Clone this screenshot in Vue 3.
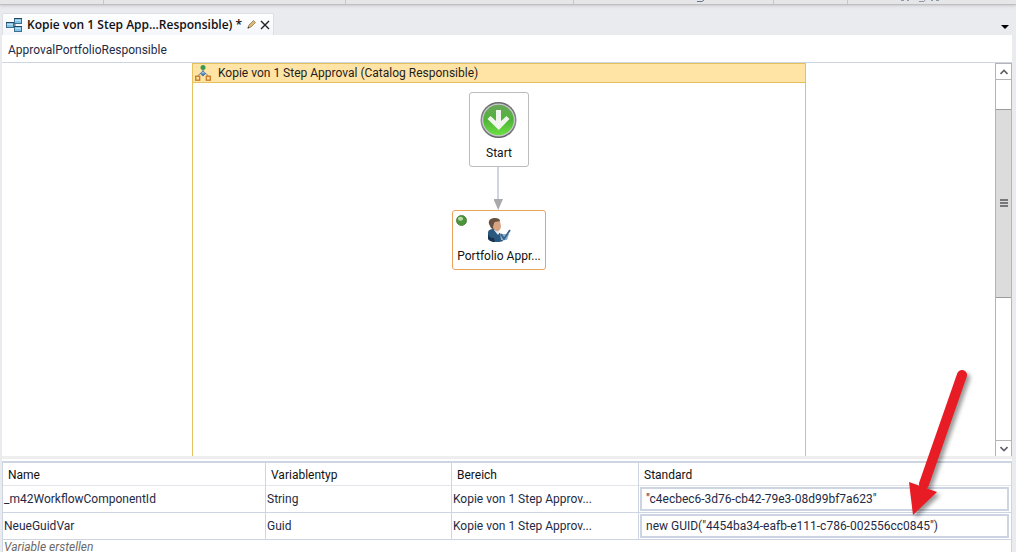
<script setup>
import { ref } from 'vue'

const rows = ref([
  { name: '_m42WorkflowComponentId', type: 'String', scope: 'Kopie von 1 Step Approv...', value: '"c4ecbec6-3d76-cb42-79e3-08d99bf7a623"' },
  { name: 'NeueGuidVar', type: 'Guid', scope: 'Kopie von 1 Step Approv...', value: 'new GUID("4454ba34-eafb-e111-c786-002556cc0845")' },
])
</script>

<template>
  <div class="app">
    <div class="ribbon">
      <i></i><i></i><i></i>
      <i><svg width="8" height="2" viewBox="0 0 8 2"><path d="M0 1.500h5l2-1.500" stroke="#66748c" fill="none" /></svg></i>
      <i></i>
      <i class="end"><svg width="38" height="2" viewBox="0 0 38 2"><path d="M0 .5h3M6 .5h2M18 1.500h5l1-1.500M30 .5h2M35 .5h3" stroke="#8f9aa8" fill="none" /></svg></i>
    </div>
    <header class="tabs">
      <div class="tab">
        <svg class="tab-icon" width="16" height="14" viewBox="0 0 16 14">
          <path d="M6 7h3M9 3v8" stroke="#48627a" fill="none" />
          <g stroke="#3f6f8f" fill="#83c5e8">
            <rect x="0.500" y="4.500" width="7" height="5" />
            <rect x="8.500" y="0.500" width="7" height="5" />
            <rect x="8.500" y="8.500" width="7" height="5" />
          </g>
          <path d="M0 4.500h8M8 .5h8M8 8.500h8" stroke="#27455c" />
          <path d="M1 6.500h6M9 2.500h6M9 10.500h6" stroke="#b5dff4" />
        </svg>
        <span class="tab-title">Kopie von 1 Step App...Responsible) *</span>
        <svg width="9" height="9" viewBox="0 0 9 9">
          <path d="M1 8l1-3 4.500-4.500 2 2L4 7z" fill="#dcb878" stroke="#8a6b3a" stroke-width=".7" />
          <path d="M.5 8.500l.6-2 1.400 1.400z" fill="#333" />
        </svg>
        <button class="close" aria-label="Tab schließen">
          <svg width="10" height="10" viewBox="0 0 10 10"><path d="M1 1l8 8M9 1L1 9" stroke="#222" stroke-width="1.400" /></svg>
        </button>
      </div>
      <button class="tab-menu" aria-label="Tabs">
        <svg width="8" height="4" viewBox="0 0 8 4"><path d="M0 0h8L4 4z" fill="#000" /></svg>
      </button>
    </header>

    <main class="document">
      <div class="crumb">ApprovalPortfolioResponsible</div>
      <div class="designer">
        <section class="sequence">
          <h1 class="sequence-head">
            <svg width="16" height="16" viewBox="0 0 16 16">
              <path d="M8 4v4M2.500 11.500L5 8.500h6l2.500 3" fill="none" stroke="#777f88" />
              <circle cx="8" cy="2.500" r="2.500" fill="#3c9a50" />
              <path d="M8 5.500L11 8.500 8 11.500 5 8.500z" fill="#3f74ad" />
              <path d="M8 6.500l2 2H6z" fill="#a9cdea" />
              <rect x=".7" y="11.200" width="4" height="4" fill="#ffdc9c" stroke="#c67b22" stroke-width="1.300" />
              <rect x="11.300" y="11.200" width="4" height="4" fill="#ffdc9c" stroke="#c67b22" stroke-width="1.300" />
            </svg>
            <span>Kopie von 1 Step Approval (Catalog Responsible)</span>
          </h1>
          <div class="flow">
            <div class="node start">
              <svg width="38" height="38" viewBox="0 0 38 38">
                <defs>
                  <linearGradient id="ring" x1="0" y1="0" x2="0" y2="1">
                    <stop offset="0" stop-color="#66666b" /><stop offset=".6" stop-color="#8c8c92" /><stop offset="1" stop-color="#5c5c62" />
                  </linearGradient>
                  <linearGradient id="green" x1="0" y1="0" x2="0" y2="1">
                    <stop offset="0" stop-color="#6aa65c" /><stop offset=".5" stop-color="#4fb437" /><stop offset="1" stop-color="#6be043" />
                  </linearGradient>
                </defs>
                <circle cx="18.500" cy="19" r="18" fill="url(#ring)" />
                <circle cx="18.500" cy="19" r="16.500" fill="#c9c9cf" />
                <circle cx="18.500" cy="19" r="15.300" fill="url(#green)" />
                <path d="M16 9h5v11l5.500-5 3 3-10.700 11L7.500 18l3-3 5.500 5z" fill="#f0f6ee" />
              </svg>
              <span>Start</span>
            </div>
            <svg class="link" width="10" height="43" viewBox="0 0 10 43">
              <path d="M4 0v34" stroke="#cfd5e2" stroke-width="2" />
              <path d="M-.5 32h9.500L4.200 43z" fill="#a9a9ad" />
            </svg>
            <div class="node activity">
              <svg class="status" width="11" height="11" viewBox="0 0 11 11">
                <circle cx="5.500" cy="5.500" r="5" fill="#4b9638" stroke="#41743a" stroke-width=".8" />
                <ellipse cx="4.500" cy="3.800" rx="2.600" ry="2" fill="#b3dca5" />
              </svg>
              <svg width="24" height="24" viewBox="0 0 24 24">
                <path d="M1 15c0-3 2-4 6-4l7 5 2 7c-5 2-12 1-15-2z" fill="#2b587f" />
                <path d="M1 16c1 3 3 4 6 4l1 4c-4 0-7-2-7-4z" fill="#19324f" />
                <path d="M7 12l4 5 2-3-2-3z" fill="#e6edf3" />
                <path d="M4 4c0-3 8-4 9-1l1 5c0 4-3 6-5 5-3-2-5-5-5-9z" fill="#d6a584" />
                <path d="M2 6c-1-4 2-6 6-6 3 0 5 1 5 3-3 1-5 0-6 2l-1 4 1 3-3-2z" fill="#66503f" />
                <path d="M13 16h9l-2 6h-6z" fill="#8fb3cf" />
                <path d="M14 16l3 5 6-9" fill="none" stroke="#35628f" stroke-width="1.800" />
              </svg>
              <span>Portfolio Appr...</span>
            </div>
          </div>
        </section>
        <div class="scrollbar">
          <button class="step" aria-label="Nach oben"><svg width="8" height="6" viewBox="0 0 8 6"><path d="M.5 5L4 1.500 7.500 5" fill="none" stroke="#606068" stroke-width="1.600" /></svg></button>
          <div class="track">
            <div class="thumb"><i></i><i></i><i></i></div>
          </div>
          <button class="step down" aria-label="Nach unten"><svg width="8" height="6" viewBox="0 0 8 6"><path d="M.5 1L4 4.500 7.500 1" fill="none" stroke="#606068" stroke-width="1.600" /></svg></button>
        </div>
      </div>
      <div class="splitter"></div>
      <div class="variables">
        <table>
          <colgroup><col class="c-name"><col class="c-type"><col class="c-scope"><col></colgroup>
          <thead>
            <tr><th>Name</th><th>Variablentyp</th><th>Bereich</th><th class="last">Standard</th></tr>
          </thead>
          <tbody>
            <tr v-for="row in rows" :key="row.name">
              <td>{{ row.name }}</td>
              <td>{{ row.type }}</td>
              <td>{{ row.scope }}</td>
              <td class="edit"><input v-model="row.value" type="text" :aria-label="'Standard ' + row.name"></td>
            </tr>
          </tbody>
        </table>
        <button class="create">Variable erstellen</button>
      </div>
    </main>

    <svg class="pointer" width="72" height="160" viewBox="0 0 72 160">
      <path d="M61 17L23 126" stroke="#e81c24" stroke-width="10" stroke-linecap="round" />
      <path d="M8 124l28 10-24 23z" fill="#e81c24" />
    </svg>
  </div>
</template>

<style>
html, body, #app { height: 100%; }
body { margin: 0; overflow: hidden; }
</style>

<style scoped>
* { box-sizing: border-box; }
.app {
  position: relative;
  height: 100%;
  display: flex;
  flex-direction: column;
  overflow: hidden;
  background: #eaebef;
  color: #1e1e1e;
  font: 12px/16px Roboto, "Open Sans", sans-serif;
}
svg { display: block; flex: none; }
button { padding: 0; border: 0; background: none; font: inherit; color: inherit; }
.ribbon {
  flex: none;
  height: 5px;
  display: grid;
  grid-template-columns: 104fr 242fr 228fr 200fr 74fr 168fr;
  background: #e6e6e8;
  border-bottom: 1px solid #bfbfc2;
  box-shadow: 0 1px 3px #c8c8cc;
}
.ribbon i { display: flex; justify-content: center; border-right: 1px solid #c8c8ca; }
.ribbon i:nth-child(4) { padding-left: 54px; }
.ribbon i.end { border-right: 0; padding-right: 24px; }
.tabs {
  flex: none;
  display: flex;
  justify-content: space-between;
  align-items: flex-end;
  height: 30px;
  padding: 0 7px 0 2px;
}
.tab {
  display: flex;
  align-items: center;
  gap: 4px;
  width: 272px;
  height: 22px;
  padding: 0 3px;
  border: 1px solid #dcdfe6;
  border-bottom: 0;
  border-radius: 2px 2px 0 0;
  background: linear-gradient(#fff, #f4f6fb);
  white-space: nowrap;
}
.tab-title { flex: 1; padding-left: 1px; font-family: "Open Sans", sans-serif; font-weight: 600; color: #111; }
.tab-menu { padding-bottom: 6px; }
.document {
  flex: 1;
  min-height: 0;
  display: flex;
  flex-direction: column;
  margin: 0 4px 0 2px;
  background: #fff;
}
.crumb { flex: none; height: 28px; padding: 7px 6px; border-bottom: 1px solid #ccd5e3; color: #1f2a44; }
.designer { flex: 1; min-height: 0; display: flex; justify-content: center; position: relative; }
.sequence {
  width: 614px;
  margin-right: 16px;
  border: 1px solid #e5c05f;
  border-bottom: 0;
}
.sequence-head {
  display: flex;
  align-items: center;
  gap: 7px;
  height: 19px;
  margin: 0;
  padding: 0 2px;
  border-bottom: 1px solid #e5c05f;
  background: #ffe4a6;
  font: inherit;
}
.flow { display: flex; flex-direction: column; align-items: center; padding-top: 9px; }
.node {
  position: relative;
  display: flex;
  flex-direction: column;
  align-items: center;
  border: 1px solid #bcbcbf;
  border-radius: 3px;
  background: #fff;
  color: #111;
  white-space: nowrap;
}
.start { width: 60px; height: 75px; padding-top: 8px; gap: 6px; }
.activity { width: 94px; height: 60px; padding-top: 7px; gap: 6px; border-color: #eaa35c; }
.status { position: absolute; left: 3px; top: 4px; }
.scrollbar {
  display: flex;
  flex-direction: column;
  position: absolute;
  top: 0;
  right: 0;
  bottom: 0;
  width: 17px;
  border: 1px solid #b4b4b6;
  border-bottom: 0;
}
.step { flex: none; display: flex; justify-content: center; align-items: center; height: 16px; border-bottom: 1px solid #b4b4b6; }
.down { border-top: 1px solid #b4b4b6; border-bottom: 0; }
.track { flex: 1; padding-top: 29px; }
.thumb {
  display: flex;
  flex-direction: column;
  justify-content: center;
  align-items: center;
  gap: 1px;
  height: 57%;
  background: #dcdcdc;
  border: solid #9c9c9e;
  border-width: 1px 0;
}
.thumb i { width: 8px; height: 2px; background: #77777c; }
.splitter { flex: none; height: 3px; margin-bottom: 2px; background: #eeeeef; }
.variables { flex: none; height: 91px; overflow: hidden; border: solid #cdd4e2; border-width: 2px 1px 0; }
table { width: 100%; table-layout: fixed; border-collapse: separate; border-spacing: 0; }
.c-name { width: 263px; }
.c-type { width: 186px; }
.c-scope { width: 187px; }
th, td { overflow: hidden; border: solid #cdd4e2; border-width: 0 1px 1px 0; text-align: left; font-weight: 400; white-space: nowrap; }
th { height: 23px; padding: 2px 5px 0; color: #111; border-bottom-color: #e3e5ea; }
td { height: 27px; padding: 0 1px; color: #1f2a44; }
th.last, td.edit { border-right: 0; }
td.edit { padding: 1px 2px 1px 1px; }
input {
  display: block;
  width: 100%;
  height: 24px;
  padding: 0 4px;
  border: 2px solid #cdd4e2;
  outline: 0;
  background: #fff;
  font: inherit;
  color: #1f2a44;
}
.create { display: block; padding-left: 1px; font-style: italic; line-height: 14px; color: #6a6a6a; }
.pointer { position: absolute; right: 43px; bottom: 34px; filter: drop-shadow(3px 3px 2px #0006); }
</style>
